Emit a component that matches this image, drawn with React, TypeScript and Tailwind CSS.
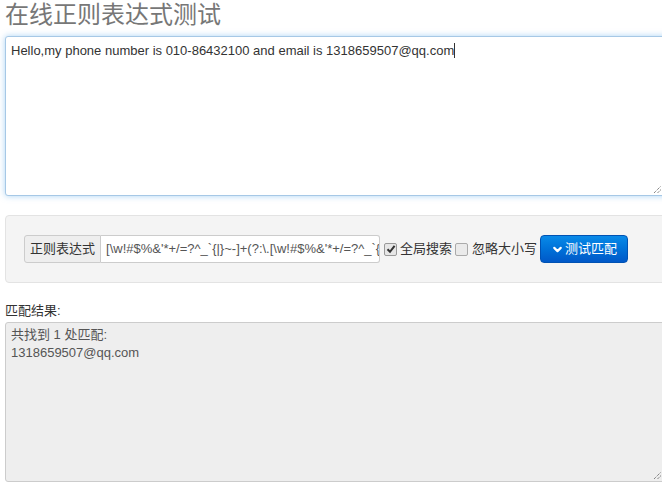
import { ChevronDown } from 'lucide-react';

const sans = '[font-family:"Liberation_Sans","Noto_Sans_CJK_SC",sans-serif]';
const pattern = "[\\w!#$%&'*+/=?^_`{|}~-]+(?:\\.[\\w!#$%&'*+/=?^_`{|}~-]+)*@(?:[\\w](?:[\\w-]*[\\w])?\\.)+[\\w](?:[\\w-]*[\\w])?";

export default function App() {
  return (
    <div className={`${sans} w-[662px] h-[485px] overflow-hidden bg-white pl-[5px] text-[13px] text-[#333]`}>
      <h1 className="text-[24px] leading-[30px] text-[#777] font-normal">在线正则表达式测试</h1>
      <div className="mt-[6px] w-[665px] h-[160px] rounded-[3px] border border-[#a6c8e6] bg-white px-[5px] py-[4px] shadow-[0_0_6px_rgba(102,175,233,0.55)] relative">
        <span className="leading-[18px]">Hello,my phone number is 010-86432100 and email is 1318659507@qq.com</span>
        <span className="inline-block w-px h-[15px] bg-[#333] align-[-3px]" />
        <Grip />
      </div>
      <div className="mt-[19px] w-[665px] h-[68px] rounded-[4px] border border-[#e3e3e3] bg-[#f4f4f4] px-[18px] pt-[19px] flex items-start">
        <div className="flex h-[28px] shrink-0">
          <span className="flex items-center px-[5px] border border-[#ccc] bg-[#eee] rounded-l-[3px] text-[#333]">正则表达式</span>
          <span className="flex items-center w-[279px] overflow-hidden whitespace-nowrap px-[5px] border border-l-0 border-[#ccc] bg-white rounded-r-[3px] text-[#555]">
            {pattern}
          </span>
        </div>
        <label className="flex items-center h-[28px] ml-[4px] shrink-0">
          <span className="w-[13px] h-[13px] border border-[#999] rounded-[2px] bg-[#e6e6e6] flex items-center justify-center">
            <svg viewBox="0 0 10 10" className="w-[10px] h-[10px]"><path d="M1.5 5.2 L4 7.8 L8.6 1.8" stroke="#333" strokeWidth="2" fill="none" /></svg>
          </span>
          <span className="ml-[3px]">全局搜索</span>
        </label>
        <label className="flex items-center h-[28px] ml-[3px] shrink-0">
          <span className="w-[13px] h-[13px] border border-[#aaa] rounded-[2px] bg-[#eaeaea]" />
          <span className="ml-[4px]">忽略大小写</span>
        </label>
        <button className="ml-[3px] h-[28px] w-[88px] shrink-0 flex items-center justify-center rounded-[4px] border border-[#0052b3] bg-gradient-to-b from-[#0a8ae8] to-[#0058c8] text-white">
          <ChevronDown size={13} strokeWidth={4} />
          <span className="ml-[1px]">测试匹配</span>
        </button>
      </div>
      <div className="mt-[18px] leading-[20px]">匹配结果:</div>
      <div className="mt-px w-[665px] h-[160px] border border-[#ccc] rounded-[3px] bg-[#eee] px-[5px] py-[3px] leading-[18px] text-[#555] relative">
        <div>共找到 1 处匹配:</div>
        <div>1318659507@qq.com</div>
        <Grip />
      </div>
    </div>
  );
}

function Grip() {
  return (
    <svg viewBox="0 0 8 8" className="absolute right-[8px] bottom-[2px] w-[8px] h-[8px]">
      <path d="M1 8 L8 1 M4.5 8 L8 4.5" stroke="#555" strokeWidth="1" strokeDasharray="1 1" />
    </svg>
  );
}
